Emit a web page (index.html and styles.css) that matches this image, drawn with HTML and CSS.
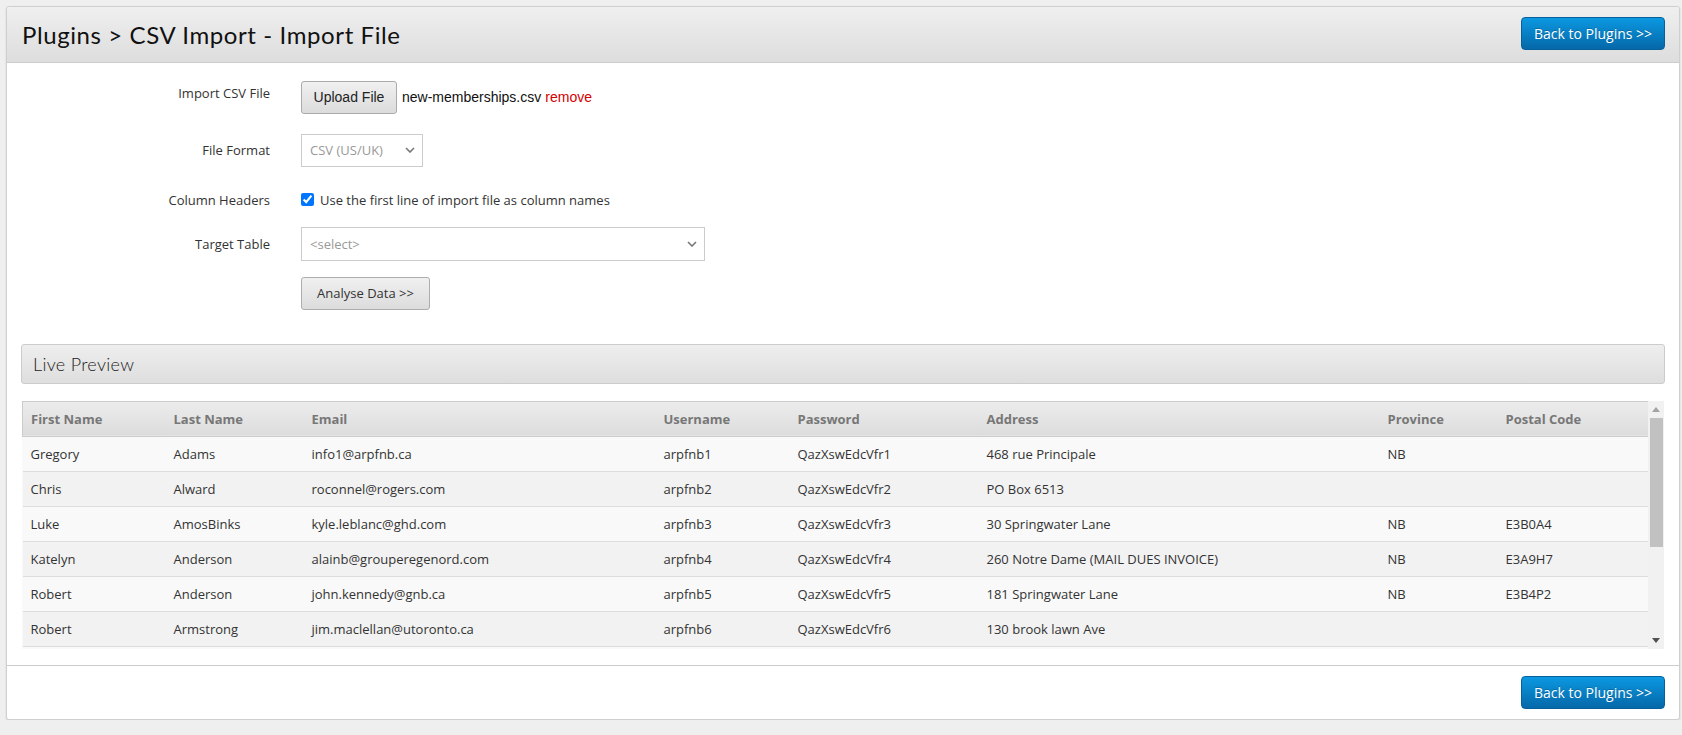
FILE: index.html
```html
<!DOCTYPE html>
<html lang="en">
<head>
<meta charset="utf-8">
<title>Plugins &gt; CSV Import - Import File</title>
<link rel="stylesheet" href="styles.css">
</head>
<body>
<div class="panel">
  <div class="panel-heading">
    <h1 class="panel-title">Plugins &gt; CSV Import - Import File</h1>
    <a class="btn-primary" href="#">Back to Plugins &gt;&gt;</a>
  </div>
  <div class="panel-body">
    <div class="form">
      <div class="form-row row-upload">
        <div class="form-label label-upload">Import CSV File</div>
        <div class="form-control-wrap">
          <button class="btn-upload" type="button">Upload File</button>
          <span class="file-name">new-memberships.csv</span>
          <a class="file-remove" href="#">remove</a>
        </div>
      </div>
      <div class="form-row row-format">
        <div class="form-label">File Format</div>
        <div class="form-control-wrap">
          <div class="select select-small">
            <span>CSV (US/UK)</span>
            <svg class="chevron" width="10" height="6" viewBox="0 0 10 6"><path d="M1 1l4 4 4-4" fill="none" stroke="#777" stroke-width="1.6"/></svg>
          </div>
        </div>
      </div>
      <div class="form-row row-check">
        <div class="form-label">Column Headers</div>
        <div class="form-control-wrap">
          <label class="check"><input type="checkbox" checked> <span>Use the first line of import file as column names</span></label>
        </div>
      </div>
      <div class="form-row row-target">
        <div class="form-label">Target Table</div>
        <div class="form-control-wrap">
          <div class="select select-wide">
            <span>&lt;select&gt;</span>
            <svg class="chevron" width="10" height="6" viewBox="0 0 10 6"><path d="M1 1l4 4 4-4" fill="none" stroke="#777" stroke-width="1.6"/></svg>
          </div>
        </div>
      </div>
      <div class="form-row row-analyse">
        <div class="form-label"></div>
        <div class="form-control-wrap">
          <button class="btn-default" type="button">Analyse Data &gt;&gt;</button>
        </div>
      </div>
    </div>

    <div class="section-bar">Live Preview</div>

    <div class="preview-area">
      <div class="preview-clip">
        <table class="preview">
          <colgroup>
            <col class="c-first"><col class="c-last"><col class="c-email"><col class="c-user"><col class="c-pass"><col class="c-addr"><col class="c-prov"><col class="c-post">
          </colgroup>
          <thead>
            <tr><th>First Name</th><th>Last Name</th><th>Email</th><th>Username</th><th>Password</th><th>Address</th><th>Province</th><th>Postal Code</th></tr>
          </thead>
          <tbody>
            <tr><td>Gregory</td><td>Adams</td><td>info1@arpfnb.ca</td><td>arpfnb1</td><td>QazXswEdcVfr1</td><td>468 rue Principale</td><td>NB</td><td></td></tr>
            <tr><td>Chris</td><td>Alward</td><td>roconnel@rogers.com</td><td>arpfnb2</td><td>QazXswEdcVfr2</td><td>PO Box 6513</td><td></td><td></td></tr>
            <tr><td>Luke</td><td>AmosBinks</td><td>kyle.leblanc@ghd.com</td><td>arpfnb3</td><td>QazXswEdcVfr3</td><td>30 Springwater Lane</td><td>NB</td><td>E3B0A4</td></tr>
            <tr><td>Katelyn</td><td>Anderson</td><td>alainb@grouperegenord.com</td><td>arpfnb4</td><td>QazXswEdcVfr4</td><td>260 Notre Dame (MAIL DUES INVOICE)</td><td>NB</td><td>E3A9H7</td></tr>
            <tr><td>Robert</td><td>Anderson</td><td>john.kennedy@gnb.ca</td><td>arpfnb5</td><td>QazXswEdcVfr5</td><td>181 Springwater Lane</td><td>NB</td><td>E3B4P2</td></tr>
            <tr><td>Robert</td><td>Armstrong</td><td>jim.maclellan@utoronto.ca</td><td>arpfnb6</td><td>QazXswEdcVfr6</td><td>130 brook lawn Ave</td><td></td><td></td></tr>
          </tbody>
        </table>
      </div>
      <div class="scrollbar" aria-hidden="true">
        <div class="sb-btn">
          <svg width="8" height="5" viewBox="0 0 8 5"><path d="M0 5L4 0L8 5Z" fill="#a3a3a3"/></svg>
        </div>
        <div class="sb-track">
          <div class="sb-thumb"></div>
        </div>
        <div class="sb-btn">
          <svg width="8" height="5" viewBox="0 0 8 5"><path d="M0 0L8 0L4 5Z" fill="#505050"/></svg>
        </div>
      </div>
    </div>
  </div>
  <div class="panel-footer">
    <a class="btn-primary" href="#">Back to Plugins &gt;&gt;</a>
  </div>
</div>
</body>
</html>
```

FILE: styles.css
```css
* { box-sizing: border-box; }

html, body {
  margin: 0;
  background: #efefef;
}

body {
  padding: 6px 2px 0 6px;
  font-family: "Open Sans", "Liberation Sans", sans-serif;
  font-size: 13px;
  color: #333;
}

.panel {
  width: 1674px;
  height: 714px;
  background: #fff;
  border: 1px solid #cfcfcf;
  border-radius: 3px;
  box-shadow: 0 1px 2px rgba(0, 0, 0, 0.12);
  display: flex;
  flex-direction: column;
}

.panel-heading {
  height: 56px;
  padding: 0 14px 0 15px;
  display: flex;
  align-items: center;
  justify-content: space-between;
  background: linear-gradient(#efefef, #dddddd);
  border-bottom: 1px solid #cccccc;
  border-radius: 3px 3px 0 0;
}

.panel-title {
  margin: 0;
  font-family: Lato, "Open Sans", sans-serif;
  font-weight: 400;
  font-size: 24px;
  color: #111;
  letter-spacing: 0.6px;
}

.btn-primary {
  display: inline-flex;
  align-items: center;
  justify-content: center;
  width: 144px;
  height: 33px;
  margin-top: -2px;
  border: 1px solid #05609c;
  border-radius: 4px;
  background: linear-gradient(#0b98e1, #0568a9);
  color: #fff;
  font-family: "Open Sans", sans-serif;
  font-size: 14px;
  text-decoration: none;
  text-shadow: 0 -1px 0 rgba(0, 0, 0, 0.2);
}

.panel-body {
  flex: 1;
  padding: 18px 14px 16px 14px;
}

.form {
  display: flex;
  flex-direction: column;
}

.form-row {
  display: grid;
  grid-template-columns: 249px 1fr;
  column-gap: 31px;
  align-items: center;
}

.row-upload { height: 33px; margin-bottom: 20px; }
.row-format { height: 33px; margin-bottom: 16px; }
.row-check { height: 34px; margin-bottom: 10px; }
.row-target { height: 34px; margin-bottom: 16px; }
.row-analyse { height: 33px; }

.form-label {
  text-align: right;
  font-size: 13px;
  color: #333;
}

.label-upload {
  align-self: start;
  padding-top: 3px;
}

.form-control-wrap {
  display: flex;
  align-items: center;
}

.btn-upload {
  height: 33px;
  width: 96px;
  padding: 0;
  border: 1px solid #ababab;
  border-radius: 3px;
  background: linear-gradient(#f0f0f0, #dcdcdc);
  font-family: "Liberation Sans", Arial, sans-serif;
  font-size: 14px;
  color: #222;
}

.file-name {
  margin-left: 5px;
  font-family: "Liberation Sans", Arial, sans-serif;
  font-size: 14px;
  color: #111;
}

.file-remove {
  margin-left: 4px;
  font-family: "Liberation Sans", Arial, sans-serif;
  font-size: 14px;
  color: #d40000;
  text-decoration: none;
}

.select {
  height: 33px;
  display: flex;
  align-items: center;
  justify-content: space-between;
  padding: 0 7px 0 8px;
  border: 1px solid #cccccc;
  background: #fff;
  color: #999;
  font-size: 13px;
}

.select-small { width: 122px; }
.select-wide { width: 404px; height: 34px; }

.check {
  display: flex;
  align-items: center;
  font-size: 13px;
  color: #333;
}

.check input {
  margin: 0 6px 0 0;
  width: 13px;
  height: 13px;
  accent-color: #0075ff;
}

.btn-default {
  height: 33px;
  width: 129px;
  padding: 0;
  border: 1px solid #adadad;
  border-radius: 3px;
  background: linear-gradient(#f0f0f0, #dcdcdc);
  font-family: "Open Sans", sans-serif;
  font-size: 13px;
  color: #333;
}

.section-bar {
  margin-top: 34px;
  height: 40px;
  display: flex;
  align-items: center;
  padding-left: 11px;
  border: 1px solid #cccccc;
  border-radius: 3px;
  background: linear-gradient(#eeeeee, #dedede);
  font-family: Lato, "Open Sans", sans-serif;
  font-weight: 300;
  font-size: 18px;
  letter-spacing: 0.3px;
  color: #222;
}

.preview-area {
  margin: 17px 0 0 1px;
  width: 1642px;
  height: 248px;
  display: flex;
}

.preview-clip {
  width: 1626px;
  height: 248px;
  overflow: hidden;
  background: #f9f9f9;
}

.scrollbar {
  width: 16px;
  height: 248px;
  background: #f1f1f1;
  display: flex;
  flex-direction: column;
}

.sb-btn {
  height: 17px;
  display: flex;
  align-items: center;
  justify-content: center;
}

.sb-track {
  flex: 1;
  padding: 0 1px 0 2px;
}

.sb-thumb {
  height: 129px;
  background: #c1c1c1;
}

.preview {
  width: 1626px;
  table-layout: fixed;
  border-collapse: collapse;
  font-size: 13px;
}

.c-first { width: 143px; }
.c-last { width: 138px; }
.c-email { width: 352px; }
.c-user { width: 134px; }
.c-pass { width: 189px; }
.c-addr { width: 401px; }
.c-prov { width: 118px; }
.c-post { width: 151px; }

.preview thead th {
  height: 35px;
  padding: 0 8px;
  text-align: left;
  font-weight: 700;
  color: #777;
  background: linear-gradient(#ececec, #dcdcdc);
  border-top: 1px solid #cccccc;
  border-bottom: 1px solid #cccccc;
  white-space: nowrap;
}

.preview thead th:first-child {
  border-left: 1px solid #cccccc;
}

.preview thead th:last-child {
  border-right: 1px solid #cccccc;
}

.preview tbody td {
  height: 35px;
  padding: 0 8px;
  border-bottom: 1px solid #dddddd;
  color: #333;
  white-space: nowrap;
  overflow: hidden;
}

.preview tbody tr:nth-child(odd) td { background: #f9f9f9; }
.preview tbody tr:nth-child(even) td { background: #f2f2f2; }

.panel-footer {
  height: 55px;
  display: flex;
  align-items: center;
  justify-content: flex-end;
  padding: 0 14px;
  border-top: 1px solid #cccccc;
}

.panel-footer .btn-primary {
  margin-top: 0;
}
```
